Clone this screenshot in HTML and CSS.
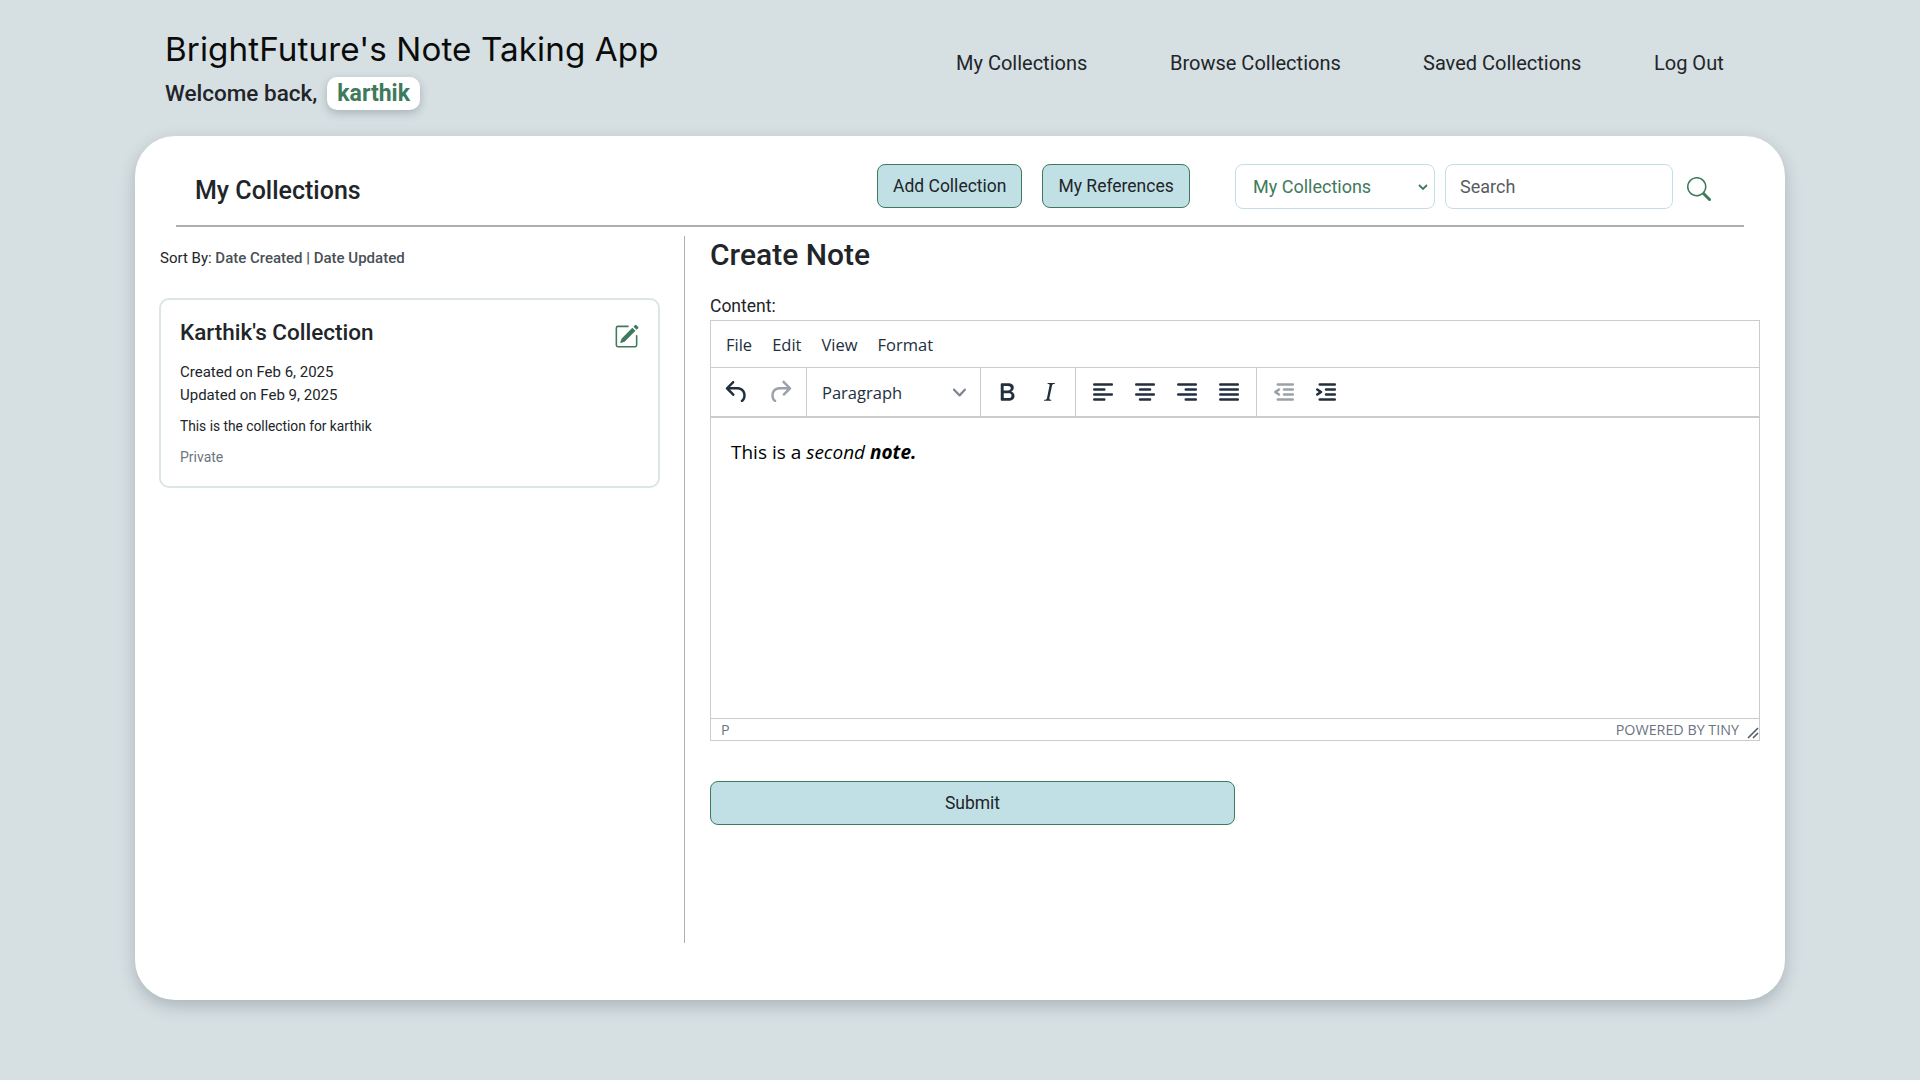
FILE: index.html
```html
<!DOCTYPE html>
<html lang="en">
<head>
<meta charset="utf-8">
<title>BrightFuture's Note Taking App</title>
<link rel="stylesheet" href="styles.css">
</head>
<body>
<header class="site-header">
  <div class="brand">
    <h1 class="brand-title">BrightFuture's Note Taking App</h1>
    <p class="welcome">Welcome back, <span class="user-badge">karthik</span></p>
  </div>
  <nav class="site-nav">
    <a class="nav-a">My Collections</a>
    <a class="nav-b">Browse Collections</a>
    <a class="nav-c">Saved Collections</a>
    <a class="nav-d">Log Out</a>
  </nav>
</header>
<main class="panel">
  <div class="panel-bar">
    <h2 class="panel-title">My Collections</h2>
    <div class="panel-actions">
      <button class="btn">Add Collection</button>
      <button class="btn">My References</button>
    </div>
    <div class="panel-search">
      <select class="scope"><option>My Collections</option></select>
      <input class="search" type="text" placeholder="Search">
      <svg class="search-icon" viewBox="0 0 16 16" fill="#3e7a5b"><path d="M11.742 10.344a6.5 6.5 0 1 0-1.397 1.398h-.001c.03.04.062.078.098.115l3.85 3.85a1 1 0 0 0 1.415-1.414l-3.85-3.85a1.007 1.007 0 0 0-.115-.1zM12 6.5a5.5 5.5 0 1 1-11 0 5.5 5.5 0 0 1 11 0z"/></svg>
    </div>
  </div>
  <div class="panel-body">
    <aside class="sidebar">
      <p class="sort"><span class="sort-label">Sort By:</span> Date Created | Date Updated</p>
      <article class="coll-card">
        <div class="coll-head">
          <h3 class="coll-title">Karthik's Collection</h3>
          <svg class="edit-icon" viewBox="0 0 16 16" fill="#3e7a5b"><path d="M15.502 1.94a.5.5 0 0 1 0 .706L14.459 3.69l-2-2L13.502.646a.5.5 0 0 1 .707 0l1.293 1.293zm-1.75 2.456-2-2L4.939 9.21a.5.5 0 0 0-.121.196l-.805 2.414a.25.25 0 0 0 .316.316l2.414-.805a.5.5 0 0 0 .196-.12l6.813-6.814z"/><path d="M1 13.5A1.5 1.5 0 0 0 2.5 15h11a1.5 1.5 0 0 0 1.5-1.5v-6a.5.5 0 0 0-1 0v6a.5.5 0 0 1-.5.5h-11a.5.5 0 0 1-.5-.5v-11a.5.5 0 0 1 .5-.5H9a.5.5 0 0 0 0-1H2.5A1.5 1.5 0 0 0 1 2.5v11z"/></svg>
        </div>
        <p class="coll-date">Created on Feb 6, 2025</p>
        <p class="coll-date">Updated on Feb 9, 2025</p>
        <p class="coll-desc">This is the collection for karthik</p>
        <p class="coll-vis">Private</p>
      </article>
    </aside>
    <section class="note">
      <h2 class="note-title">Create Note</h2>
      <label class="note-label">Content:</label>
      <div class="editor">
        <div class="ed-menu"><span>File</span><span>Edit</span><span>View</span><span>Format</span></div>
        <div class="ed-tools">
          <div class="ed-group ed-history">
            <span class="tb tb-wide"><svg viewBox="0 0 24 24"><path d="M6.4 8H12c3.7 0 6.2 2 6.8 5.1.6 2.7-.4 5.6-2.3 6.8a1 1 0 0 1-1-1.8c1.1-.6 1.8-2.7 1.4-4.6-.5-2.1-2.1-3.5-4.9-3.5H6.4l3.3 3.3a1 1 0 1 1-1.4 1.4l-5-5a1 1 0 0 1 0-1.4l5-5a1 1 0 0 1 1.4 1.4L6.4 8Z"/></svg></span>
            <span class="tb tb-wide tb-off"><svg viewBox="0 0 24 24"><path d="M17.6 10H12c-2.8 0-4.4 1.4-4.9 3.5-.4 2 .3 4 1.4 4.6a1 1 0 1 1-1 1.8c-2-1.2-2.9-4.1-2.3-6.8.6-3 3-5.1 6.8-5.1h5.6l-3.3-3.3a1 1 0 1 1 1.4-1.4l5 5a1 1 0 0 1 0 1.4l-5 5a1 1 0 0 1-1.4-1.4l3.3-3.3Z"/></svg></span>
          </div>
          <div class="ed-group ed-format">
            <span>Paragraph</span>
            <svg class="chev" viewBox="0 0 10 10"><path d="M8.7 2.2c.3-.3.8-.3 1 0 .4.4.4.9 0 1.2L5.7 7.8c-.3.3-.9.3-1.2 0L.2 3.4a.8.8 0 0 1 0-1.2c.3-.3.8-.3 1.1 0L5 6l3.7-3.8Z"/></svg>
          </div>
          <div class="ed-group">
            <span class="tb"><svg viewBox="0 0 24 24"><path d="M7.8 19c-.3 0-.5 0-.6-.2l-.2-.5V5.7c0-.2 0-.4.2-.5l.6-.2h5c1.5 0 2.7.3 3.5 1 .7.6 1.1 1.4 1.1 2.5a3 3 0 0 1-.6 1.9c-.4.6-1 1-1.6 1.2.4.1.9.3 1.3.6s.8.7 1 1.2c.4.4.5 1 .5 1.6 0 1.3-.4 2.3-1.3 3-.8.7-2.1 1-3.8 1H7.8Zm5-8.3c.6 0 1.2-.1 1.6-.5.4-.3.6-.7.6-1.3 0-1.1-.8-1.7-2.3-1.7H9.3v3.5h3.4Zm.5 6c.7 0 1.3-.1 1.7-.4.4-.4.6-.9.6-1.5s-.2-1-.7-1.4c-.4-.3-1-.4-2-.4H9.4v3.8h4Z"/></svg></span>
            <span class="tb"><svg viewBox="0 0 24 24"><path d="m16.7 4.7-.1.9h-.3c-.6 0-1 0-1.4.3-.3.3-.4.6-.5 1.1l-2.1 9.8v.6c0 .5.4.8 1.4.8h.2l-.2.8H8l.2-.8h.2c1.1 0 1.8-.5 2-1.5l2-9.8.1-.5c0-.6-.4-.8-1.4-.8h-.3l.2-.9h5.8Z"/></svg></span>
          </div>
          <div class="ed-group ed-align">
            <span class="tb"><svg viewBox="0 0 24 24"><path d="M5 5h14c.6 0 1 .4 1 1s-.4 1-1 1H5a1 1 0 1 1 0-2Zm0 4h8c.6 0 1 .4 1 1s-.4 1-1 1H5a1 1 0 1 1 0-2Zm0 8h8c.6 0 1 .4 1 1s-.4 1-1 1H5a1 1 0 0 1 0-2Zm0-4h14c.6 0 1 .4 1 1s-.4 1-1 1H5a1 1 0 0 1 0-2Z"/></svg></span>
            <span class="tb"><svg viewBox="0 0 24 24"><path d="M5 5h14c.6 0 1 .4 1 1s-.4 1-1 1H5a1 1 0 1 1 0-2Zm3 4h8c.6 0 1 .4 1 1s-.4 1-1 1H8a1 1 0 1 1 0-2Zm0 8h8c.6 0 1 .4 1 1s-.4 1-1 1H8a1 1 0 0 1 0-2Zm-3-4h14c.6 0 1 .4 1 1s-.4 1-1 1H5a1 1 0 0 1 0-2Z"/></svg></span>
            <span class="tb"><svg viewBox="0 0 24 24"><path d="M5 5h14c.6 0 1 .4 1 1s-.4 1-1 1H5a1 1 0 1 1 0-2Zm6 4h8c.6 0 1 .4 1 1s-.4 1-1 1h-8a1 1 0 0 1 0-2Zm0 8h8c.6 0 1 .4 1 1s-.4 1-1 1h-8a1 1 0 0 1 0-2Zm-6-4h14c.6 0 1 .4 1 1s-.4 1-1 1H5a1 1 0 0 1 0-2Z"/></svg></span>
            <span class="tb"><svg viewBox="0 0 24 24"><path d="M5 5h14c.6 0 1 .4 1 1s-.4 1-1 1H5a1 1 0 1 1 0-2Zm0 4h14c.6 0 1 .4 1 1s-.4 1-1 1H5a1 1 0 1 1 0-2Zm0 4h14c.6 0 1 .4 1 1s-.4 1-1 1H5a1 1 0 0 1 0-2Zm0 4h14c.6 0 1 .4 1 1s-.4 1-1 1H5a1 1 0 0 1 0-2Z"/></svg></span>
          </div>
          <div class="ed-group ed-align ed-last">
            <span class="tb tb-off"><svg viewBox="0 0 24 24"><path d="M7 5h12c.6 0 1 .4 1 1s-.4 1-1 1H7a1 1 0 1 1 0-2Zm5 4h7c.6 0 1 .4 1 1s-.4 1-1 1h-7a1 1 0 0 1 0-2Zm0 4h7c.6 0 1 .4 1 1s-.4 1-1 1h-7a1 1 0 0 1 0-2Zm-5 4h12a1 1 0 0 1 0 2H7a1 1 0 0 1 0-2Zm1.6-3.8a1 1 0 0 1-1.2 1.6l-3-2a1 1 0 0 1 0-1.6l3-2a1 1 0 0 1 1.2 1.6L6.8 12l1.8 1.2Z"/></svg></span>
            <span class="tb"><svg viewBox="0 0 24 24"><path d="M7 5h12c.6 0 1 .4 1 1s-.4 1-1 1H7a1 1 0 1 1 0-2Zm5 4h7c.6 0 1 .4 1 1s-.4 1-1 1h-7a1 1 0 0 1 0-2Zm0 4h7c.6 0 1 .4 1 1s-.4 1-1 1h-7a1 1 0 0 1 0-2Zm-5 4h12a1 1 0 0 1 0 2H7a1 1 0 0 1 0-2Zm-2.6-3.8L6.2 12l-1.8-1.2a1 1 0 0 1 1.2-1.6l3 2a1 1 0 0 1 0 1.6l-3 2a1 1 0 1 1-1.2-1.6Z"/></svg></span>
          </div>
        </div>
        <div class="ed-content">This is a <em>second</em> <strong><em>note.</em></strong></div>
        <div class="ed-status">
          <span class="ed-path">P</span>
          <span class="ed-brand">POWERED BY TINY</span>
          <svg class="ed-resize" viewBox="0 0 12 12"><path d="M1 11 11 1M6 11l5-5" stroke="#555f6d" stroke-width="1.6" fill="none"/></svg>
        </div>
      </div>
      <button class="btn btn-submit">Submit</button>
    </section>
  </div>
</main>
</body>
</html>
```
FILE: styles.css
```css
* { box-sizing: border-box; }
html, body { margin: 0; height: 100%; }
body {
  background: #d6dfe2;
  font-family: Roboto, "Liberation Sans", sans-serif;
  color: #212529;
  overflow: hidden;
}
h1, h2, h3, p { margin: 0; }

.site-header {
  height: 136px;
  padding: 28px 0 0 165px;
  display: flex;
}
.brand { width: 791px; }
.brand-title {
  font-family: Inter, "Noto Sans", sans-serif;
  font-size: 33.2px;
  font-weight: 400;
  line-height: 42px;
  color: #0b0b0b;
  letter-spacing: 0.1px;
}
.welcome {
  font-size: 22.5px;
  font-weight: 500;
  line-height: 33px;
  display: flex;
  align-items: center;
  gap: 10px;
  margin-top: 7px;
}
.user-badge {
  background: #fff;
  color: #3e7a5b;
  font-weight: 700;
  font-size: 23px;
  padding: 0 10px;
  border-radius: 10px;
  box-shadow: 0 3px 8px rgba(60, 80, 90, .3);
}
.site-nav {
  display: flex;
  font-size: 20px;
  line-height: 28px;
  padding-top: 21px;
}
.nav-a { width: 214px; }
.nav-b { width: 253px; }
.nav-c { width: 231px; }

.panel {
  width: 1650px;
  height: 864px;
  margin-left: 135px;
  background: #fff;
  border-radius: 40px;
  box-shadow: 0 6px 16px rgba(60, 80, 90, .28);
}
.panel-bar {
  height: 91px;
  margin: 0 41px;
  padding: 28px 0 0 19px;
  border-bottom: 2px solid #aeaeae;
  display: flex;
  align-items: flex-start;
}
.panel-title {
  width: 682px;
  margin-top: 2px;
  font-size: 25px;
  font-weight: 500;
  line-height: 50px;
}
.panel-actions { display: flex; gap: 20px; width: 358px; }
.btn {
  height: 44px;
  padding: 0 15px;
  background: #c0e0e5;
  border: 1px solid #3e7a5b;
  border-radius: 8px;
  font: 400 17.5px Roboto, sans-serif;
  color: #212529;
}
.panel-search { display: flex; align-items: flex-start; gap: 10px; }
.scope {
  appearance: none;
  width: 200px;
  height: 45px;
  padding: 0 13px 0 17px;
  background: #fff url("data:image/svg+xml,%3Csvg xmlns='http://www.w3.org/2000/svg' viewBox='0 0 10 10'%3E%3Cpath d='M1 3l4 4 4-4' fill='none' stroke='%233e7a5b' stroke-width='1.8'/%3E%3C/svg%3E") no-repeat right 6px center / 10px 10px;
  border: 1px solid #c0e0e5;
  border-radius: 8px;
  font: 400 18px Roboto, sans-serif;
  color: #3e7a5b;
}
.search {
  width: 228px;
  height: 45px;
  padding: 0 14px;
  border: 1px solid #c0e0e5;
  border-radius: 8px;
  font: 400 18px Roboto, sans-serif;
}
.search::placeholder { color: #595c5f; opacity: 1; }
.search-icon { width: 24px; height: 24px; margin: 13px 0 0 4px; }

.panel-body { display: flex; margin-top: 9px; }
.sidebar {
  width: 550px;
  height: 707px;
  padding: 12px 24px 0;
  border-right: 1px solid #aeaeae;
}
.sort { margin-left: 1px; font-size: 15px; font-weight: 500; line-height: 20px; color: #495057; }
.sort-label { color: #212529; font-weight: 400; }
.coll-card {
  width: 501px;
  height: 190px;
  margin-top: 30px;
  padding: 16px 19px;
  border: 2px solid #dce5e7;
  border-radius: 10px;
}
.coll-head { display: flex; justify-content: space-between; }
.coll-title { font-size: 22.5px; font-weight: 500; line-height: 32px; }
.edit-icon { width: 25px; height: 25px; margin: 8px 0 0; }
.coll-date { font-size: 15px; line-height: 23px; }
.coll-head + .coll-date { margin-top: 12px; }
.coll-desc { font-size: 13.75px; line-height: 20px; margin-top: 9px; }
.coll-vis { font-size: 14px; line-height: 20px; margin-top: 11px; color: #6c757d; }

.note { width: 1077px; padding-left: 25px; }
.note-title { font-size: 30px; font-weight: 500; line-height: 38px; }
.note-label { display: block; font-size: 17.5px; line-height: 24px; margin-top: 20px; }
.editor {
  width: 1050px;
  height: 421px;
  margin-top: 2px;
  border: 1px solid #ccc;
  display: flex;
  flex-direction: column;
  font-family: "Open Sans", "Noto Sans", sans-serif;
  color: #222f3e;
}
.ed-menu {
  height: 47px;
  padding-left: 15px;
  border-bottom: 1px solid #ccc;
  display: flex;
  align-items: center;
  gap: 20px;
  font-size: 16.5px;
}
.ed-tools { height: 50px; border-bottom: 2px solid #ccc; display: flex; }
.ed-group { display: flex; align-items: center; padding: 0 5px; border-right: 1px solid #ccc; }
.ed-last { border-right: 0; }
.ed-history { padding: 0 4px; }
.ed-align { padding: 0 6px; }
.tb { width: 42px; display: flex; justify-content: center; }
.tb-wide { width: 43.5px; }
.tb svg { width: 30px; height: 30px; fill: #222f3e; }
.tb-off svg { fill: #9aa1a9; }
.ed-format { width: 174px; padding: 0 14px 0 15px; justify-content: space-between; font-size: 16.5px; }
.chev { width: 13px; height: 13px; fill: #7e8791; }
.ed-content {
  flex: 1;
  padding: 20px 20px;
  font-size: 19px;
  line-height: 28px;
  color: #000;
}
.ed-status {
  height: 22px;
  border-top: 1px solid #ccc;
  display: flex;
  align-items: center;
  padding: 0 0 0 10px;
  font-size: 14.3px;
  color: #6b7480;
}
.ed-path { flex: 1; }
.ed-resize { width: 12px; height: 12px; margin: 6px 0 0 8px; }
.btn-submit {
  display: block;
  width: 525px;
  margin-top: 40px;
  border-radius: 8px;
}
```
